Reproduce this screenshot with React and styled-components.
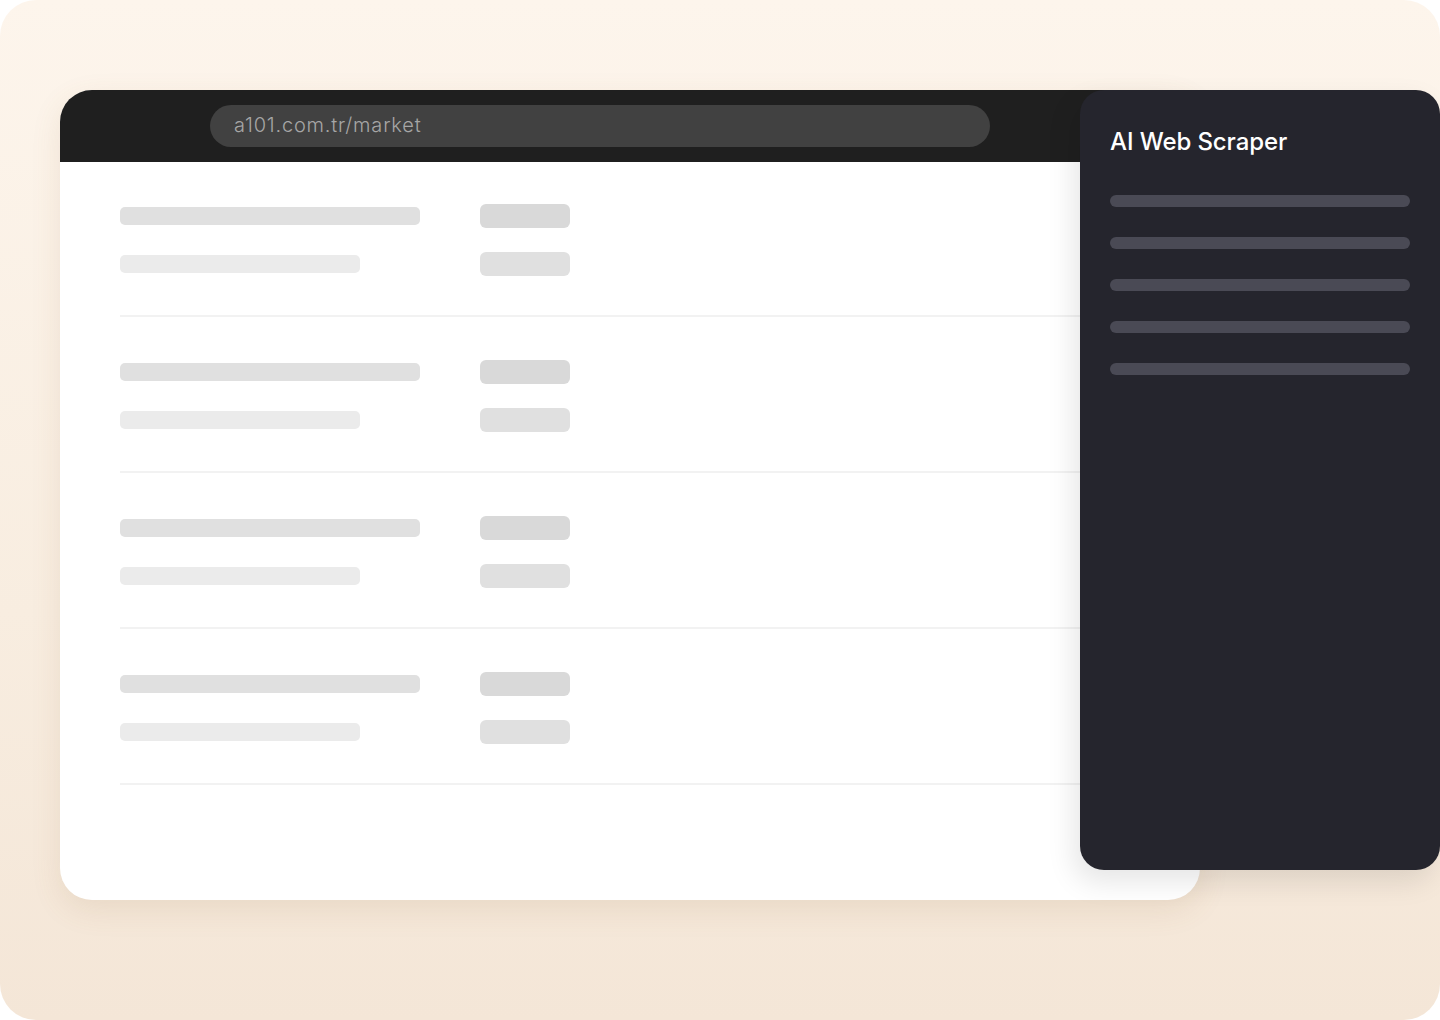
import React from "react";
import styled, { createGlobalStyle } from "styled-components";

const GlobalStyle = createGlobalStyle`
  html, body {
    margin: 0;
    background: #ffffff;
  }
  body {
    font-family: Inter, "Noto Sans", sans-serif;
  }
`;

const Stage = styled.div`
  position: relative;
  width: 1440px;
  height: 1020px;
  box-sizing: border-box;
  padding: 90px 240px 120px 60px;
  border-radius: 36px;
  overflow: hidden;
  background: linear-gradient(180deg, #fdf5ec 0%, #f8ede0 60%, #f4e6d7 100%);
`;

const Browser = styled.section`
  display: flex;
  flex-direction: column;
  height: 100%;
  border-radius: 32px;
  overflow: hidden;
  background: #ffffff;
  box-shadow: 0 10px 30px rgba(150, 110, 60, 0.12);
`;

const TopBar = styled.header`
  flex: none;
  display: flex;
  align-items: center;
  height: 72px;
  padding-left: 150px;
  background: #1f1f1f;
`;

const UrlBar = styled.div`
  display: flex;
  align-items: center;
  width: 780px;
  height: 42px;
  box-sizing: border-box;
  padding: 0 24px 2px;
  border-radius: 21px;
  background: #414141;
  color: #a6a6a6;
  font-size: 20px;
  font-weight: 300;
  letter-spacing: 0.8px;
`;

const List = styled.div`
  padding: 0 60px;
`;

const Row = styled.div`
  display: flex;
  align-items: flex-start;
  gap: 60px;
  padding: ${(p) => (p.first ? "42px" : "43px")} 0 39px;
  border-bottom: 2px solid #f2f2f2;
`;

const Column = styled.div`
  display: flex;
  flex-direction: column;
  gap: 24px;
`;

const Cell = styled.div`
  display: flex;
  align-items: center;
  height: 24px;
`;

const Bar = styled.div`
  width: ${(p) => p.w}px;
  height: 18px;
  border-radius: 5px;
  background: ${(p) => p.color};
`;

const Pill = styled.div`
  width: 90px;
  height: 24px;
  border-radius: 6px;
  background: ${(p) => p.color};
`;

const Panel = styled.aside`
  position: absolute;
  top: 90px;
  left: 1080px;
  width: 360px;
  height: 780px;
  box-sizing: border-box;
  padding: 38px 30px;
  border-radius: 24px;
  background: #25252d;
  box-shadow: -6px 12px 28px rgba(0, 0, 0, 0.1);
`;

const Title = styled.h2`
  margin: 0 0 39px;
  color: #ffffff;
  font-size: 24px;
  font-weight: 500;
  line-height: 28px;
  letter-spacing: -0.1px;
`;

const Lines = styled.div`
  display: flex;
  flex-direction: column;
  gap: 30px;
`;

const Line = styled.div`
  width: 300px;
  height: 12px;
  border-radius: 6px;
  background: #4a4a55;
`;

const rows = [0, 1, 2, 3];

const App = () => (
  <>
    <GlobalStyle />
    <Stage>
      <Browser>
        <TopBar>
          <UrlBar>a101.com.tr/market</UrlBar>
        </TopBar>
        <List>
          {rows.map((i) => (
            <Row key={i} first={i === 0}>
              <Column>
                <Cell>
                  <Bar w={300} color="#e0e0e0" />
                </Cell>
                <Cell>
                  <Bar w={240} color="#ebebeb" />
                </Cell>
              </Column>
              <Column>
                <Pill color="#d9d9d9" />
                <Pill color="#e0e0e0" />
              </Column>
            </Row>
          ))}
        </List>
      </Browser>
      <Panel>
        <Title>AI Web Scraper</Title>
        <Lines>
          {[0, 1, 2, 3, 4].map((i) => (
            <Line key={i} />
          ))}
        </Lines>
      </Panel>
    </Stage>
  </>
);

export default App;
